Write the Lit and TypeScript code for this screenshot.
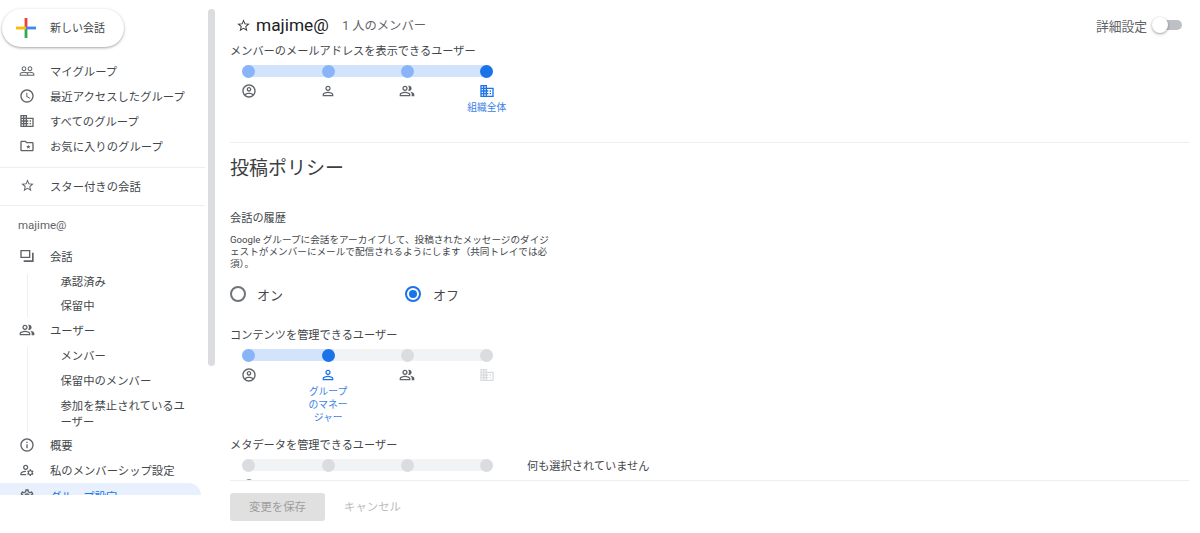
import { LitElement, html, css, svg, nothing } from "lit";
import { customElement } from "lit/decorators.js";

const P: Record<string, any> = {
  people: svg`<path d="M16.5 13c-1.2 0-3.07.34-4.5 1-1.43-.67-3.3-1-4.5-1C5.33 13 1 14.08 1 16.25V19h22v-2.75c0-2.17-4.33-3.25-6.5-3.25zm-4 4.5h-10v-1.25c0-.54 2.56-1.75 5-1.75s5 1.21 5 1.75v1.25zm9 0H14v-1.25c0-.46-.2-.86-.52-1.22.88-.3 1.96-.53 3.02-.53 2.44 0 5 1.21 5 1.75v1.25zM7.5 12c1.93 0 3.5-1.57 3.5-3.5S9.43 5 7.5 5 4 6.57 4 8.5 5.57 12 7.5 12zm0-5.5c1.1 0 2 .9 2 2s-.9 2-2 2-2-.9-2-2 .9-2 2-2zm9 5.5c1.93 0 3.5-1.57 3.5-3.5S18.43 5 16.5 5 13 6.57 13 8.5s1.57 3.5 3.5 3.5zm0-5.5c1.1 0 2 .9 2 2s-.9 2-2 2-2-.9-2-2 .9-2 2-2z"/>`,
  clock: svg`<path d="M11.99 2C6.47 2 2 6.48 2 12s4.47 10 9.99 10C17.52 22 22 17.52 22 12S17.52 2 11.99 2zM12 20c-4.42 0-8-3.58-8-8s3.58-8 8-8 8 3.58 8 8-3.58 8-8 8zm.5-13H11v6l5.25 3.15.75-1.23-4.5-2.67z"/>`,
  domain: svg`<path d="M12 7V3H2v18h20V7H12zM6 19H4v-2h2v2zm0-4H4v-2h2v2zm0-4H4V9h2v2zm0-4H4V5h2v2zm4 12H8v-2h2v2zm0-4H8v-2h2v2zm0-4H8V9h2v2zm0-4H8V5h2v2zm10 12h-8v-2h2v-2h-2v-2h2v-2h-2V9h8v10zm-2-8h-2v2h2v-2zm0 4h-2v2h2v-2z"/>`,
  star: svg`<path d="M22 9.24l-7.19-.62L12 2 9.19 8.63 2 9.24l5.46 4.73L5.82 21 12 17.27 18.18 21l-1.63-7.03L22 9.24zM12 15.4l-3.76 2.27 1-4.28-3.32-2.88 4.38-.38L12 6.1l1.71 4.04 4.38.38-3.32 2.88 1 4.28L12 15.4z"/>`,
  folder: svg`<path d="M20 6h-8l-2-2H4c-1.1 0-2 .9-2 2v12c0 1.1.9 2 2 2h16c1.1 0 2-.9 2-2V8c0-1.1-.9-2-2-2zm0 12H4V6h5.17l2 2H20v10z"/><path d="M14 10l.9 2.1 2.3.2-1.7 1.5.5 2.2-2-1.2-2 1.2.5-2.2-1.7-1.5 2.3-.2z"/>`,
  forum: svg`<path d="M2 3h15v12H2zm2 2v8h11V5z" fill-rule="evenodd"/><path d="M19.5 7H22v14H7v-2.5h12.5z"/>`,
  users: svg`<path d="M16.67 13.13C18.04 14.06 19 15.32 19 17v3h4v-3c0-2.18-3.57-3.47-6.33-3.87z"/><path d="M15 12c2.21 0 4-1.79 4-4s-1.79-4-4-4c-.47 0-.91.1-1.33.24C14.5 5.27 15 6.58 15 8s-.5 2.73-1.33 3.76c.42.14.86.24 1.33.24z"/><path d="M9 12c2.21 0 4-1.79 4-4s-1.79-4-4-4-4 1.79-4 4 1.79 4 4 4zm0-6c1.1 0 2 .9 2 2s-.9 2-2 2-2-.9-2-2 .9-2 2-2z"/><path d="M9 13c-2.67 0-8 1.34-8 4v3h16v-3c0-2.66-5.33-4-8-4zm6 5H3v-.99C3.2 16.29 6.3 15 9 15s5.8 1.29 6 2v1z"/>`,
  info: svg`<path d="M11 7h2v2h-2zm0 4h2v6h-2zm1-9C6.48 2 2 6.48 2 12s4.48 10 10 10 10-4.48 10-10S17.52 2 12 2zm0 18c-4.41 0-8-3.59-8-8s3.59-8 8-8 8 3.59 8 8-3.59 8-8 8z"/>`,
  manage: svg`<path d="M4 18v-.65c0-.34.16-.66.41-.81C6.1 15.53 8.03 15 10 15c.03 0 .05 0 .08.01.1-.7.3-1.37.59-1.98-.22-.02-.44-.03-.67-.03-2.42 0-4.68.67-6.61 1.82-.88.52-1.39 1.5-1.39 2.53V20h9.26c-.42-.6-.75-1.28-.97-2H4z"/><path d="M10 12c2.21 0 4-1.79 4-4s-1.79-4-4-4-4 1.79-4 4 1.79 4 4 4zm0-6c1.1 0 2 .9 2 2s-.9 2-2 2-2-.9-2-2 .9-2 2-2z"/><path d="M20.75 16c0-.22-.03-.42-.06-.63l1.14-1.01-1-1.73-1.45.49c-.32-.27-.68-.48-1.08-.63L18 11h-2l-.3 1.49c-.4.15-.76.36-1.08.63l-1.45-.49-1 1.73 1.14 1.01c-.03.21-.06.41-.06.63s.03.42.06.63l-1.14 1.01 1 1.73 1.45-.49c.32.27.68.48 1.08.63L16 21h2l.3-1.49c.4-.15.76-.36 1.08-.63l1.45.49 1-1.73-1.14-1.01c.03-.21.06-.41.06-.63zM17 18c-1.1 0-2-.9-2-2s.9-2 2-2 2 .9 2 2-.9 2-2 2z"/>`,
  settings: svg`<path d="M19.43 12.98c.04-.32.07-.64.07-.98 0-.34-.03-.66-.07-.98l2.11-1.65c.19-.15.24-.42.12-.64l-2-3.46c-.09-.16-.26-.25-.44-.25-.06 0-.12.01-.17.03l-2.49 1c-.52-.4-1.08-.73-1.69-.98l-.38-2.65C14.46 2.18 14.25 2 14 2h-4c-.25 0-.46.18-.49.42l-.38 2.65c-.61.25-1.17.59-1.69.98l-2.49-1c-.06-.02-.12-.03-.18-.03-.17 0-.34.09-.43.25l-2 3.46c-.13.22-.07.49.12.64l2.11 1.65c-.04.32-.07.65-.07.98 0 .33.03.66.07.98l-2.11 1.65c-.19.15-.24.42-.12.64l2 3.46c.09.16.26.25.44.25.06 0 .12-.01.17-.03l2.49-1c.52.4 1.08.73 1.69.98l.38 2.65c.03.24.24.42.49.42h4c.25 0 .46-.18.49-.42l.38-2.65c.61-.25 1.17-.59 1.69-.98l2.49 1c.06.02.12.03.18.03.17 0 .34-.09.43-.25l2-3.46c.12-.22.07-.49-.12-.64l-2.11-1.65zm-1.98-1.71c.04.31.05.52.05.73 0 .21-.02.43-.05.73l-.14 1.13.89.7 1.08.84-.7 1.21-1.27-.51-1.04-.42-.9.68c-.43.32-.84.56-1.25.73l-1.06.43-.16 1.13-.2 1.35h-1.4l-.19-1.35-.16-1.13-1.06-.43c-.43-.18-.83-.41-1.23-.71l-.91-.7-1.06.43-1.27.51-.7-1.21 1.08-.84.89-.7-.14-1.13c-.03-.31-.05-.54-.05-.74s.02-.43.05-.73l.14-1.13-.89-.7-1.08-.84.7-1.21 1.27.51 1.04.42.9-.68c.43-.32.84-.56 1.25-.73l1.06-.43.16-1.13.2-1.35h1.39l.19 1.35.16 1.13 1.06.43c.43.18.83.41 1.23.71l.91.7 1.06-.43 1.27-.51.7 1.21-1.07.85-.89.7.14 1.13zM12 8c-2.21 0-4 1.79-4 4s1.79 4 4 4 4-1.79 4-4-1.79-4-4-4zm0 6c-1.1 0-2-.9-2-2s.9-2 2-2 2 .9 2 2-.9 2-2 2z"/>`,
  account: svg`<path d="M12 2C6.48 2 2 6.48 2 12s4.48 10 10 10 10-4.48 10-10S17.52 2 12 2zM7.07 18.28c.43-.9 3.05-1.78 4.93-1.78s4.51.88 4.93 1.78C15.57 19.36 13.86 20 12 20s-3.57-.64-4.93-1.72zm11.29-1.45c-1.43-1.74-4.9-2.33-6.36-2.33s-4.93.59-6.36 2.33C4.62 15.49 4 13.82 4 12c0-4.41 3.59-8 8-8s8 3.59 8 8c0 1.82-.62 3.49-1.64 4.83zM12 6c-1.94 0-3.5 1.56-3.5 3.5S10.06 13 12 13s3.5-1.56 3.5-3.5S13.94 6 12 6zm0 5c-.83 0-1.5-.67-1.5-1.5S11.17 8 12 8s1.5.67 1.5 1.5S12.83 11 12 11z"/>`,
  person: svg`<path d="M12 5.9c1.16 0 2.1.94 2.1 2.1s-.94 2.1-2.1 2.1S9.9 9.16 9.9 8s.94-2.1 2.1-2.1m0 9c2.97 0 6.1 1.46 6.1 2.1v1.1H5.9V17c0-.64 3.13-2.1 6.1-2.1M12 4C9.79 4 8 5.79 8 8s1.79 4 4 4 4-1.79 4-4-1.79-4-4-4zm0 9c-2.67 0-8 1.34-8 4v3h16v-3c0-2.66-5.33-4-8-4z"/>`,
};

const icon = (name: string, cls = "") =>
  html`<svg class="ic ${cls}" viewBox="0 0 24 24" fill="currentColor">${P[name]}</svg>`;

const STOP_ICONS = ["account", "person", "users", "domain"];
const STEP = 79.3;

@customElement("perm-slider")
class PermSlider extends LitElement {
  static properties = {
    selected: { type: Number },
    label: { attribute: false },
    dimLast: { type: Boolean },
  };
  selected = -1;
  label: any = null;
  dimLast = false;
  static styles = css`
    :host { display: block; width: 251px; font-family: Roboto, "Noto Sans CJK JP", sans-serif; }
    .track {
      display: grid; grid-template-columns: repeat(4, 13px); column-gap: 66.3px;
      height: 12px; border-radius: 6px;
    }
    .dot { width: 13px; height: 13px; border-radius: 50%; background: #dadce0; margin-top: -0.5px; }
    .dot.before { background: #8ab4f8; }
    .dot.on { background: #1a73e8; }
    .stops { display: grid; grid-template-columns: repeat(4, 13px); column-gap: 66.3px; margin-top: var(--stop-gap, 6px); }
    .stop { display: flex; flex-direction: column; align-items: center; color: #5f6368; }
    .stop svg { width: 16px; height: 16px; flex: none; display: block; }
    .stop.on { color: #1a73e8; }
    .stop.dim { color: #dadce0; }
    .txt { flex: none; width: 44px; margin-top: 2px; font-size: 9.75px; line-height: 13px; text-align: center; white-space: nowrap; color: #3b7fe6; }
  `;
  render() {
    const w = this.selected >= 0 ? this.selected * STEP + 13 : 0;
    const bg = `linear-gradient(to right, #d2e3fc ${w}px, #f1f3f4 ${w}px)`;
    return html`
      <div class="track" style="background:${bg}">
        ${[0, 1, 2, 3].map(
          (i) => html`<div class="dot ${i === this.selected ? "on" : i < this.selected ? "before" : ""}"></div>`
        )}
      </div>
      <div class="stops">
        ${STOP_ICONS.map(
          (n, i) => html`<div class="stop ${i === this.selected ? "on" : ""} ${this.dimLast && i === 3 ? "dim" : ""}">
            <svg viewBox="0 0 24 24" fill="currentColor">${P[n]}</svg>
            ${i === this.selected && this.label ? html`<div class="txt">${this.label}</div>` : nothing}
          </div>`
        )}
      </div>
    `;
  }
}

const NAV_A = [
  ["people", "マイグループ"],
  ["clock", "最近アクセスしたグループ"],
  ["domain", "すべてのグループ"],
  ["folder", "お気に入りのグループ"],
];

@customElement("app-root")
class AppRoot extends LitElement {
  static styles = css`
    :host {
      display: flex; width: 1200px; height: 533px; overflow: hidden; background: #fff;
      font-family: Roboto, "Noto Sans CJK JP", sans-serif; color: #43474b;
    }
    .ic { width: 16px; height: 16px; display: block; flex: none; color: #5f6368; }
    .ic.sm { width: 15px; height: 15px; margin: 0 0.5px; }

    /* sidebar */
    .side { width: 215px; height: 495px; flex: none; overflow: hidden; position: relative; padding-top: 9px; box-sizing: border-box; }
    .bar { position: absolute; left: 208px; top: 9px; width: 7px; height: 357px; border-radius: 4px; background: #dadce0; }
    .new {
      width: 122px; height: 38px; margin-left: 2px; margin-bottom: 11px; box-sizing: border-box;
      border-radius: 19px; background: #fff; display: flex; align-items: center; padding: 0 0 3px 14px; gap: 14px;
      box-shadow: 0 1px 3px rgba(60,64,67,.35), 0 1px 2px rgba(60,64,67,.15);
      font-size: 11px;
    }
    .new svg { width: 20px; height: 20px; flex: none; margin-top: 3px; }
    .row { width: 205px; height: 25px; display: flex; align-items: center; box-sizing: border-box; padding-left: 19px; gap: 15px; font-size: 11.35px; white-space: nowrap; }
    .row.active { width: 201px; background: #e8f0fe; color: #1a73e8; border-radius: 0 16px 16px 0; margin-top: 1px; }
    .hr { height: 1px; width: 205px; background: #eeeeee; }
    .hr.a { margin: 9px 0 5px; }
    .hr.b { margin: 7px 0 7px; }
    .group-name { height: 25px; line-height: 25px; padding-left: 18px; font-size: 11.5px; color: #5f6368; margin-bottom: 5px; }
    .subs { margin-left: 27px; border-left: 1.5px solid #eceef0; padding-left: 32.5px; width: 135px; font-size: 11.35px; line-height: 16px; box-sizing: content-box; }
    .subs.one { margin-top: 6px; display: flex; flex-direction: column; gap: 8px; padding-bottom: 3px; }
    .subs.two { margin-top: 5px; padding-top: 1px; padding-bottom: 2px; display: flex; flex-direction: column; gap: 9px; }
    .sub { white-space: nowrap; }

    /* main */
    .main { flex: 1; min-width: 0; display: flex; flex-direction: column; padding: 0 11px 0 15px; }
    .scroll { height: 480px; flex: none; overflow: hidden; padding-top: 14px; box-sizing: border-box; }
    .head { display: flex; align-items: center; height: 22px; margin-bottom: 8px; }
    .head .ic { width: 15px; height: 15px; margin-left: 5.5px; margin-right: 5.5px; color: #3c4043; }
    .name { font-size: 17.3px; color: #202124; }
    .count { font-size: 12.3px; color: #5f6368; margin-left: 13.5px; }
    .spacer { flex: 1; }
    .adv { font-size: 12.75px; color: #5f6368; margin-right: 5px; }
    .toggle { width: 30px; height: 18px; position: relative; display: flex; align-items: center; margin-right: 7px; }
    .toggle i { display: block; width: 22px; height: 10px; margin-left: 8px; border-radius: 5px; background: #bdc1c6; }
    .toggle b { position: absolute; left: 0; top: 1px; width: 16px; height: 16px; border-radius: 50%; background: #fff; box-shadow: 0 1px 3px rgba(0,0,0,.4); }
    .lbl { font-size: 11.2px; line-height: 16px; height: 16px; white-space: nowrap; margin-bottom: 5px; }
    .s-wrap { margin-left: 12.3px; }
    .sec-hr { height: 1px; background: #eeeeee; margin-top: 28px; }
    h2 { font-size: 19px; font-weight: 400; line-height: 24px; margin: 14px 0 0; color: #3c4043; }
    .sub-h { font-size: 11.2px; line-height: 16px; margin-top: 30px; }
    .desc { font-size: 9.62px; line-height: 12px; margin-top: 7px; white-space: nowrap; }
    .radios { display: grid; grid-template-columns: 175px 175px; height: 20px; margin-top: 14px; margin-bottom: 24px; }
    .radio { display: flex; align-items: center; gap: 11px; font-size: 13px; }
    .radio + .radio { gap: 12px; }
    .circle { width: 16px; height: 16px; box-sizing: border-box; border: 2px solid #70757a; border-radius: 50%; flex: none; display: flex; align-items: center; justify-content: center; }
    .circle.on { border-color: #1a73e8; }
    .circle.on::after { content: ""; width: 8px; height: 8px; border-radius: 50%; background: #1a73e8; }
    .lbl.m2 { margin-top: 14px; }
    .row-s { display: flex; margin-left: 12.3px; gap: 33.7px; --stop-gap: 7px; }
    .none { font-size: 11.2px; line-height: 14px; white-space: nowrap; padding-top: 1px; }

    .foot { flex: 1; border-top: 1px solid #eeeeee; display: flex; align-items: flex-start; padding-top: 12px; gap: 19px; }
    .save { width: 95px; height: 28px; box-sizing: border-box; padding-bottom: 2px; background: #e0e0e0; border-radius: 3px; font-size: 11.4px; color: #9e9e9e; display: flex; align-items: center; justify-content: center; }
    .cancel { height: 28px; box-sizing: border-box; padding-bottom: 2px; display: flex; align-items: center; font-size: 11.4px; color: #bdbdbd; }
  `;

  render() {
    return html`
      <nav class="side">
        <div class="new">
          <svg viewBox="0 0 20 20">
            <rect x="8.6" y="0" width="2.8" height="10" fill="#ea4335"></rect>
            <rect x="8.6" y="10" width="2.8" height="10" fill="#34a853"></rect>
            <rect x="0" y="8.6" width="10" height="2.8" fill="#fbbc04"></rect>
            <rect x="10" y="8.6" width="10" height="2.8" fill="#4285f4"></rect>
          </svg>
          <span>新しい会話</span>
        </div>
        ${NAV_A.map(([i, t]) => html`<div class="row">${icon(i)}<span>${t}</span></div>`)}
        <div class="hr a"></div>
        <div class="row">${icon("star", "sm")}<span>スター付きの会話</span></div>
        <div class="hr b"></div>
        <div class="group-name">majime@</div>
        <div class="row">${icon("forum")}<span>会話</span></div>
        <div class="subs one">
          <div class="sub">承認済み</div>
          <div class="sub">保留中</div>
        </div>
        <div class="row">${icon("users")}<span>ユーザー</span></div>
        <div class="subs two">
          <div class="sub">メンバー</div>
          <div class="sub">保留中のメンバー</div>
          <div class="sub">参加を禁止されているユ<br />ーザー</div>
        </div>
        <div class="row">${icon("info")}<span>概要</span></div>
        <div class="row">${icon("manage")}<span>私のメンバーシップ設定</span></div>
        <div class="row active">${icon("settings")}<span>グループ設定</span></div>
        <div class="bar"></div>
      </nav>
      <main class="main">
        <div class="scroll">
          <div class="head">
            ${icon("star")}
            <span class="name">majime@</span>
            <span class="count">1 人のメンバー</span>
            <span class="spacer"></span>
            <span class="adv">詳細設定</span>
            <span class="toggle"><i></i><b></b></span>
          </div>
          <div class="lbl">メンバーのメールアドレスを表示できるユーザー</div>
          <div class="s-wrap"><perm-slider .selected=${3} .label=${"組織全体"}></perm-slider></div>
          <div class="sec-hr"></div>
          <h2>投稿ポリシー</h2>
          <div class="sub-h">会話の履歴</div>
          <div class="desc">
            Google グループに会話をアーカイブして、投稿されたメッセージのダイジ<br />
            ェストがメンバーにメールで配信されるようにします（共同トレイでは必<br />
            須）。
          </div>
          <div class="radios">
            <div class="radio"><span class="circle"></span>オン</div>
            <div class="radio"><span class="circle on"></span>オフ</div>
          </div>
          <div class="lbl">コンテンツを管理できるユーザー</div>
          <div class="s-wrap">
            <perm-slider .selected=${1} .dimLast=${true} .label=${html`グループ<br />のマネー<br />ジャー`}></perm-slider>
          </div>
          <div class="lbl m2">メタデータを管理できるユーザー</div>
          <div class="row-s">
            <perm-slider .selected=${-1}></perm-slider>
            <div class="none">何も選択されていません</div>
          </div>
        </div>
        <div class="foot">
          <div class="save">変更を保存</div>
          <div class="cancel">キャンセル</div>
        </div>
      </main>
    `;
  }
}
